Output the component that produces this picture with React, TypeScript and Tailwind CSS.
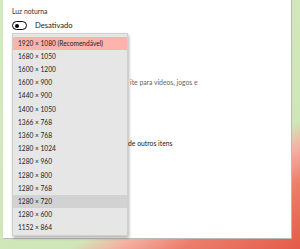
import React from "react";

const items = [
  "1920 × 1080 (Recomendável)",
  "1680 × 1050",
  "1600 × 1200",
  "1600 × 900",
  "1440 × 900",
  "1400 × 1050",
  "1366 × 768",
  "1360 × 768",
  "1280 × 1024",
  "1280 × 960",
  "1280 × 800",
  "1280 × 768",
  "1280 × 720",
  "1280 × 600",
  "1152 × 864",
];

export default function App() {
  return (
    <div
      className="relative w-[300px] h-[249px] overflow-hidden flex items-start pl-[3px] bg-[linear-gradient(151deg,#d3e9c0_0%,#cfe6b8_69%,#f4b3a3_75%,#ec7d6c_84%,#e55a4a_100%)]"
      style={{ fontFamily: 'Lato, "Open Sans", sans-serif' }}
    >
      <div className="w-[289px] h-[239px] bg-white border-r border-b border-[#b9b9b9] flex flex-col pl-[9px]">
        <div className="pt-[6px] text-[6.8px] text-[#333]">Luz noturna</div>
        <div className="flex items-center gap-[8px] mt-[4px]">
          <div className="w-[15px] h-[9px] rounded-full border border-black flex items-center pl-[2px]">
            <div className="w-[4px] h-[4px] rounded-full bg-black" />
          </div>
          <span className="text-[7.6px] text-[#222]">Desativado</span>
        </div>
        <div className="ml-[118px] mt-[45px] text-[6.8px] text-[#666]">
          ite para vídeos, jogos e
        </div>
        <div className="ml-[116px] mt-[51px] text-[6.8px] text-[#222]">
          de outros itens
        </div>
      </div>
      <div className="absolute left-[12px] top-[33px] w-[116px] h-[203px] bg-[#e6e6e6] border border-[#cfcfcf] shadow-[1px_2px_3px_rgba(0,0,0,0.3)] pt-[3px]">
        {items.map((t, i) => (
          <div
            key={t}
            className={
              "h-[13.2px] flex items-center pl-[5px] text-[6.6px] text-[#222] " +
              (i === 0 ? "bg-[#ffb3ac]" : i === 12 ? "bg-[#d2d2d2]" : "")
            }
          >
            {t}
          </div>
        ))}
      </div>
    </div>
  );
}
